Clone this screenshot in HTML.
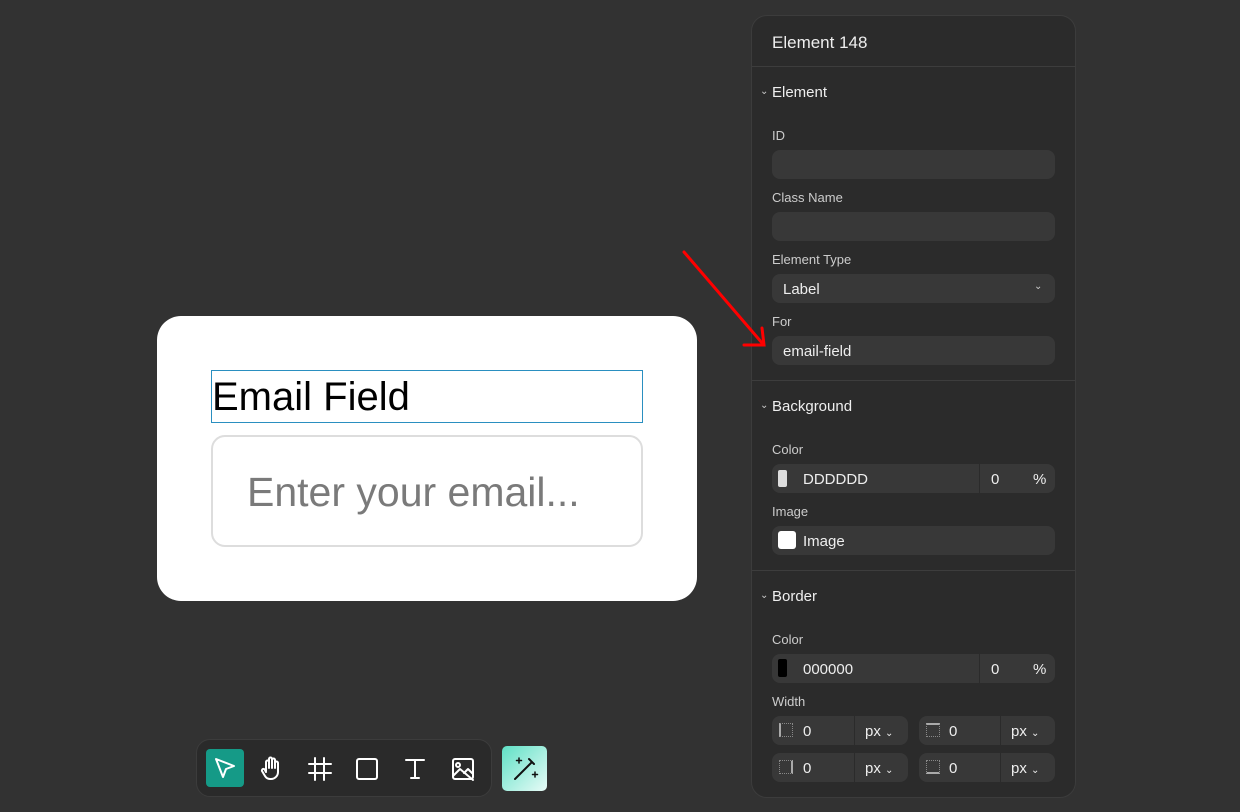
<!DOCTYPE html>
<html><head><style>
*{box-sizing:border-box;margin:0;padding:0}
body{width:1240px;height:812px;background:#323232;font-family:"Liberation Sans",sans-serif;position:relative;overflow:hidden;color:#fff}
.card{position:absolute;left:157px;top:316px;width:540px;height:285px;background:#fff;border-radius:24px}
.lbl{position:absolute;left:211px;top:370px;width:432px;height:53px;border:1px solid #2a8fc0;color:#000;font-size:40px;line-height:53px;padding-left:0px}
.inp{position:absolute;left:211px;top:435px;width:432px;height:112px;border:2px solid #ddd;border-radius:14px;color:#7a7a7a;font-size:41px;line-height:110px;padding-left:34px}
.panel{position:absolute;left:751px;top:15px;width:325px;height:783px;background:#2b2b2b;border:1px solid #3c3c3c;border-radius:16px}
.t{position:absolute;font-size:15px;color:#eee}
.s{position:absolute;font-size:13px;color:#ccc}
.f{position:absolute;background:#383838;border-radius:8px;height:29px}
.hr{position:absolute;left:752px;width:323px;height:1px;background:#3d3d3d}
.v{position:absolute;font-size:15px;color:#eee}
.sep{position:absolute;width:1px;height:29px;background:#2b2b2b}
.tb{position:absolute;left:196px;top:739px;width:296px;height:58px;background:#2a2a2a;border:1px solid #3c3c3c;border-radius:14px}
</style></head><body>
<div class="card"></div>
<div class="lbl">Email Field</div>
<div class="inp">Enter your email...</div>

<div class="panel"></div>
<svg style="position:absolute;left:0;top:0" width="1240" height="812"><g stroke="#f00" stroke-width="3" fill="none" stroke-linecap="round"><line x1="684" y1="252" x2="763" y2="344"/><polyline points="762,328 764,345 744,345"/></g></svg>
<div class="t" style="left:772px;top:33px;font-size:17px">Element 148</div>
<div class="hr" style="top:66px"></div>
<div class="s" style="left:760px;top:86px;font-size:10px">⌄</div>
<div class="t" style="left:772px;top:84px">Element</div>
<div class="s" style="left:772px;top:128px">ID</div>
<div class="f" style="left:772px;top:150px;width:283px"></div>
<div class="s" style="left:772px;top:190px">Class Name</div>
<div class="f" style="left:772px;top:212px;width:283px"></div>
<div class="s" style="left:772px;top:252px">Element Type</div>
<div class="f" style="left:772px;top:274px;width:283px"></div>
<div class="v" style="left:783px;top:281px">Label</div>
<div class="s" style="left:1034px;top:281px;font-size:10px">⌄</div>
<div class="s" style="left:772px;top:314px">For</div>
<div class="f" style="left:772px;top:336px;width:283px"></div>
<div class="v" style="left:783px;top:343px">email-field</div>
<div class="hr" style="top:380px"></div>
<div class="s" style="left:760px;top:400px;font-size:10px">⌄</div>
<div class="t" style="left:772px;top:398px">Background</div>
<div class="s" style="left:772px;top:442px">Color</div>
<div class="f" style="left:772px;top:464px;width:283px"></div>
<div class="sep" style="left:979px;top:464px"></div>
<div style="position:absolute;left:778px;top:470px;width:9px;height:17px;background:#ddd;border-radius:2px"></div>
<div class="v" style="left:803px;top:471px">DDDDDD</div>
<div class="v" style="left:991px;top:471px">0</div>
<div class="v" style="left:1033px;top:471px">%</div>
<div class="s" style="left:772px;top:504px">Image</div>
<div class="f" style="left:772px;top:526px;width:283px"></div>
<div style="position:absolute;left:778px;top:531px;width:18px;height:18px;background:#fff;border-radius:3px"></div>
<div class="v" style="left:803px;top:533px">Image</div>
<div class="hr" style="top:570px"></div>
<div class="s" style="left:760px;top:590px;font-size:10px">⌄</div>
<div class="t" style="left:772px;top:588px">Border</div>
<div class="s" style="left:772px;top:632px">Color</div>
<div class="f" style="left:772px;top:654px;width:283px"></div>
<div class="sep" style="left:979px;top:654px"></div>
<div style="position:absolute;left:778px;top:659px;width:9px;height:18px;background:#000;border-radius:2px"></div>
<div class="v" style="left:803px;top:661px">000000</div>
<div class="v" style="left:991px;top:661px">0</div>
<div class="v" style="left:1033px;top:661px">%</div>
<div class="s" style="left:772px;top:694px">Width</div>
<div class="f" style="left:772px;top:716px;width:136px"></div>
<div class="f" style="left:919px;top:716px;width:136px"></div>
<div class="f" style="left:772px;top:753px;width:136px"></div>
<div class="f" style="left:919px;top:753px;width:136px"></div>
<div class="sep" style="left:854px;top:716px"></div><div class="sep" style="left:1000px;top:716px"></div>
<div class="sep" style="left:854px;top:753px"></div><div class="sep" style="left:1000px;top:753px"></div>
<div style="position:absolute;left:779px;top:723px;width:14px;height:14px;border:1px dotted #888;border-left:2px solid #aaa"></div>
<div style="position:absolute;left:926px;top:723px;width:14px;height:14px;border:1px dotted #888;border-top:2px solid #aaa"></div>
<div style="position:absolute;left:779px;top:760px;width:14px;height:14px;border:1px dotted #888;border-right:2px solid #aaa"></div>
<div style="position:absolute;left:926px;top:760px;width:14px;height:14px;border:1px dotted #888;border-bottom:2px solid #aaa"></div>
<div class="v" style="left:803px;top:723px">0</div><div class="v" style="left:949px;top:723px">0</div>
<div class="v" style="left:803px;top:760px">0</div><div class="v" style="left:949px;top:760px">0</div>
<div class="v" style="left:865px;top:723px">px <span style="font-size:10px">⌄</span></div>
<div class="v" style="left:1011px;top:723px">px <span style="font-size:10px">⌄</span></div>
<div class="v" style="left:865px;top:760px">px <span style="font-size:10px">⌄</span></div>
<div class="v" style="left:1011px;top:760px">px <span style="font-size:10px">⌄</span></div>

<div class="tb"></div>
<div style="position:absolute;left:206px;top:749px;width:38px;height:38px;background:#159a87;border-radius:4px"></div>
<svg style="position:absolute;left:0;top:0" width="1240" height="812" fill="none" stroke="#fff" stroke-width="2" stroke-linejoin="round" stroke-linecap="round">
<path d="M216 759 L234 766 L226 769 L223 777 Z"/>
<path d="M266 771 V762 a1.5 1.5 0 0 1 3 0 V768 M269 768 V759 a1.5 1.5 0 0 1 3 0 V768 M272 768 V760 a1.5 1.5 0 0 1 3 0 V768 M275 768 V763 a1.5 1.5 0 0 1 3 0 V772 a7 7 0 0 1 -7 7 h-1 a6 6 0 0 1 -5 -3 l-3 -5 a1.5 1.5 0 0 1 3 -1 l1 2"/>
<path d="M315 758 V780 M324 758 V780 M309 764 H331 M309 773 H331"/>
<rect x="357" y="759" width="20" height="20" rx="2"/>
<path d="M406 760 H424 M415 760 V778 M411 778 H419"/>
<rect x="453" y="759" width="20" height="20" rx="2"/><circle cx="458" cy="765" r="2"/><path d="M453 776 L460 769 L473 780 M464 773 L468 769 L473 774"/>
</svg>
<div style="position:absolute;left:502px;top:746px;width:45px;height:45px;border-radius:5px;background:linear-gradient(135deg,#5fe0c5,#e8fbf7)"></div>
<svg style="position:absolute;left:502px;top:746px" width="45" height="45" fill="none" stroke="#111" stroke-width="2" stroke-linecap="round"><path d="M13 33 L30 16 M27 13 l5 5"/><path d="M17 12 v5 M14.5 14.5 h5 M33 26 v5 M30.5 28.5 h5" stroke-width="1.5"/></svg>
</body></html>
